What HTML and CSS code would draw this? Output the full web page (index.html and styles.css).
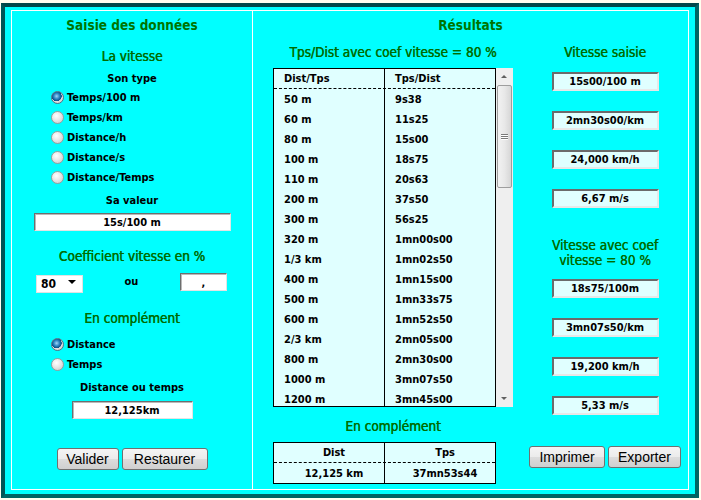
FILE: index.html
```html
<!DOCTYPE html>
<html>
<head>
  <title>Allure et vitesse</title>
  <link rel="stylesheet" href="styles.css">
</head>
<body>
  <div class="frame">
    <div class="panels">

      <section class="panel saisie">
        <h1>Saisie des données</h1>

        <h2 class="gap-vitesse">La vitesse</h2>
        <div class="label gap-7">Son type</div>
        <div class="radios gap-1">
          <label><input type="radio" name="type" checked> Temps/100 m</label>
          <label><input type="radio" name="type"> Temps/km</label>
          <label><input type="radio" name="type"> Distance/h</label>
          <label><input type="radio" name="type"> Distance/s</label>
          <label><input type="radio" name="type"> Distance/Temps</label>
        </div>

        <div class="label gap-7">Sa valeur</div>
        <input class="field valeur" type="text" value="15s/100 m">

        <h2 class="gap-coef">Coefficient vitesse en %</h2>
        <div class="coef-row">
          <div class="select">
            <select>
              <option>80</option>
              <option>90</option>
              <option>100</option>
            </select>
          </div>
          <span class="label">ou</span>
          <input class="field small" type="text" value=",">
        </div>

        <h2 class="gap-compl">En complément</h2>
        <div class="radios gap-7">
          <label><input type="radio" name="compl" checked> Distance</label>
          <label><input type="radio" name="compl"> Temps</label>
        </div>

        <div class="label gap-7">Distance ou temps</div>
        <input class="field distance" type="text" value="12,125km">

        <div class="buttons gap-buttons-left">
          <button class="btn valider">Valider</button>
          <button class="btn restaurer">Restaurer</button>
        </div>
      </section>

      <section class="panel resultats">
        <h1>Résultats</h1>

        <div class="cols">
          <div class="col-table">
            <h2>Tps/Dist avec coef vitesse = 80 %</h2>
            <div class="list-wrap">
              <div class="list">
                <div class="row head"><span>Dist/Tps</span><span>Tps/Dist</span></div>
                <div class="rows">
                  <!-- rows filled by script -->
                </div>
              </div>
              <div class="scrollbar">
                <div class="arrow up"></div>
                <div class="thumb"><i></i><i></i><i></i></div>
                <div class="arrow down"></div>
              </div>
            </div>

            <h2 class="gap-11">En complément</h2>
            <div class="compl-table">
              <div class="row head"><span>Dist</span><span>Tps</span></div>
              <div class="row"><span>12,125 km</span><span>37mn53s44</span></div>
            </div>
          </div>

          <div class="col-speed">
            <h2>Vitesse saisie</h2>
            <div class="boxes">
              <div class="box">15s00/100 m</div>
              <div class="box">2mn30s00/km</div>
              <div class="box">24,000 km/h</div>
              <div class="box">6,67 m/s</div>
            </div>

            <h2 class="two-lines"><span>Vitesse avec coef</span><span>vitesse = 80 %</span></h2>
            <div class="boxes gap-12">
              <div class="box">18s75/100m</div>
              <div class="box">3mn07s50/km</div>
              <div class="box">19,200 km/h</div>
              <div class="box">5,33 m/s</div>
            </div>

            <div class="buttons gap-buttons-right">
              <button class="btn imprimer">Imprimer</button>
              <button class="btn exporter">Exporter</button>
            </div>
          </div>
        </div>
      </section>

    </div>
  </div>

  <script>
    const temps = [
      ['50 m', '9s38'], ['60 m', '11s25'], ['80 m', '15s00'], ['100 m', '18s75'],
      ['110 m', '20s63'], ['200 m', '37s50'], ['300 m', '56s25'], ['320 m', '1mn00s00'],
      ['1/3 km', '1mn02s50'], ['400 m', '1mn15s00'], ['500 m', '1mn33s75'], ['600 m', '1mn52s50'],
      ['2/3 km', '2mn05s00'], ['800 m', '2mn30s00'], ['1000 m', '3mn07s50'], ['1200 m', '3mn45s00']
    ];

    const rows = document.querySelector('.list .rows');
    temps.forEach(t => {
      rows.innerHTML += `<div class="row"><span>${t[0]}</span><span>${t[1]}</span></div>`;
    });
  </script>
</body>
</html>
```

FILE: styles.css
```css
body {
  margin: 0;
  background-color: #fffff0;
  font-family: "DejaVu Sans Condensed", "DejaVu Sans", sans-serif;
  color: #000;
}

.frame {
  box-sizing: border-box;
  width: 698px;
  height: 495px;
  margin: 3px 0 0 1px;
  padding: 3px 6px 4px;
  background-color: #00ffff;
  border: 4px solid #006464;
  border-top-color: #004848;
  border-left-color: #005656;
}

.panels {
  box-sizing: border-box;
  height: 100%;
  display: grid;
  grid-template-columns: 241px 1fr;
  border: 1px solid #fff;
}

.panel {
  display: flex;
  flex-direction: column;
}

.saisie {
  align-items: center;
  border-right: 1px solid #fff;
}

h1 {
  margin: 5px 0 0;
  font-size: 13.5px;
  line-height: 18px;
  font-weight: bold;
  color: #007400;
  text-align: center;
}

h2 {
  margin: 0;
  font-size: 13.5px;
  line-height: 17px;
  font-weight: normal;
  color: #006c00;
  text-shadow: 0.4px 0 0 #006c00;
  text-align: center;
}

.label {
  font-size: 11px;
  line-height: 14px;
  font-weight: bold;
}

.gap-1 { margin-top: 1px; }
.gap-7 { margin-top: 7px; }
.gap-11 { margin-top: 11px; }
.gap-12 { margin-top: 12px; }
.gap-vitesse { margin-top: 14px; }
.gap-coef { margin-top: 17px; }
.gap-compl { margin-top: 19px; }
.gap-buttons-left { margin-top: 29px; }
.gap-buttons-right { margin-top: 31px; }

/* radio buttons */
.radios {
  align-self: stretch;
  padding-left: 39px;
}

.radios label {
  display: flex;
  align-items: center;
  height: 20px;
  font-size: 11px;
  font-weight: bold;
}

.radios input {
  appearance: none;
  width: 13px;
  height: 13px;
  margin: 0 3px 0 0;
  border: 1px solid #9c9c9c;
  border-radius: 50%;
  background: radial-gradient(circle at 40% 35%, #ffffff 0, #e8e8e8 45%, #c4c4c4 100%);
  box-sizing: border-box;
}

.radios input:checked {
  background:
    radial-gradient(circle at 42% 38%, #9fd6f7 0, #2d86c4 30%, #0b4a82 52%, transparent 56%),
    radial-gradient(circle at 40% 35%, #ffffff 0, #e8e8e8 45%, #c4c4c4 100%);
  border-color: #5a6f82;
}

/* text fields */
.field {
  box-sizing: border-box;
  height: 18px;
  padding: 0;
  margin: 0;
  background-color: #fff;
  border: 1px solid;
  border-color: #6e6e6e #e4e4e4 #e4e4e4 #6e6e6e;
  box-shadow: inset 1px 1px 0 #b9b9b9;
  font-family: inherit;
  font-size: 11px;
  font-weight: bold;
  text-align: center;
  outline: none;
}

.valeur {
  width: 197px;
  margin-top: 5px;
}

.distance {
  width: 121px;
  margin-top: 6px;
}

.coef-row {
  align-self: stretch;
  display: flex;
  align-items: center;
  justify-content: space-between;
  margin-top: 8px;
  padding: 0 25px 0 24px;
}

.small {
  width: 47px;
}

.select {
  position: relative;
  width: 47px;
  height: 18px;
}

.select select {
  appearance: none;
  box-sizing: border-box;
  width: 100%;
  height: 100%;
  margin: 0;
  padding: 0 0 0 4px;
  background-color: #fff;
  border: 1px solid #e2e2e2;
  border-radius: 0;
  font-family: inherit;
  font-size: 12px;
  font-weight: bold;
  color: #000;
}

.select::after {
  content: "";
  position: absolute;
  right: 7px;
  top: 7px;
  border-left: 4px solid transparent;
  border-right: 4px solid transparent;
  border-top: 4px solid #000;
  pointer-events: none;
}

/* buttons */
.buttons {
  display: flex;
  gap: 3px;
}

.btn {
  height: 22px;
  padding: 0;
  border: 1px solid #707070;
  border-radius: 3px;
  background: linear-gradient(#f4f4f4 0, #ebebeb 50%, #dcdcdc 51%, #cfcfcf 100%);
  font-family: "Liberation Sans", Arial, sans-serif;
  font-size: 14px;
  color: #000;
  cursor: pointer;
}

.valider { width: 62px; }
.restaurer { width: 86px; }
.imprimer { width: 76px; }
.exporter { width: 73px; }

/* results panel */
.cols {
  display: grid;
  grid-template-columns: 240px 1fr;
  column-gap: 9px;
  margin-top: 10px;
  padding-left: 20px;
}

.col-table,
.col-speed {
  display: flex;
  flex-direction: column;
  align-items: center;
}

.list-wrap {
  display: flex;
  margin-top: 7px;
}

.list,
.compl-table {
  box-sizing: border-box;
  width: 223px;
  background-color: #e0ffff;
  border: 1px solid #000;
  background-image: linear-gradient(#000, #000);
  background-size: 1px 100%;
  background-position: 110px 0;
  background-repeat: no-repeat;
}

.list {
  height: 339px;
  overflow: hidden;
}

.row {
  display: grid;
  grid-template-columns: 110px 1fr;
  column-gap: 1px;
  height: 20px;
  align-items: center;
  font-size: 11px;
  font-weight: bold;
}

.row span {
  padding-left: 10px;
}

.row.head {
  height: 19px;
  border-bottom: 1px dashed #000;
}

.compl-table {
  align-self: flex-start;
  margin-top: 7px;
}

.compl-table .row span {
  text-align: center;
}

.scrollbar {
  box-sizing: border-box;
  width: 17px;
  height: 339px;
  position: relative;
  background-color: #efefef;
}

.arrow {
  position: absolute;
  left: 5px;
  border-left: 3px solid transparent;
  border-right: 3px solid transparent;
}

.arrow.up {
  top: 7px;
  border-bottom: 3px solid #606060;
}

.arrow.down {
  bottom: 7px;
  border-top: 3px solid #606060;
}

.thumb {
  position: absolute;
  left: 1px;
  top: 17px;
  box-sizing: border-box;
  width: 15px;
  height: 103px;
  border: 1px solid #9e9e9e;
  border-radius: 2px;
  background: linear-gradient(90deg, #f2f2f2, #e8e8e8 50%, #d6d6d6);
  display: flex;
  flex-direction: column;
  align-items: center;
  justify-content: center;
  gap: 1px;
}

.thumb i {
  display: block;
  width: 7px;
  height: 1px;
  background-color: #7a7a7a;
  box-shadow: 0 1px 0 #fff;
}

.boxes {
  display: flex;
  flex-direction: column;
  gap: 20px;
  margin-top: 11px;
}

.box {
  box-sizing: border-box;
  width: 107px;
  height: 19px;
  line-height: 15px;
  background-color: #e0ffff;
  border: 2px solid;
  border-color: #6b6b6b #e8e8e8 #e8e8e8 #6b6b6b;
  font-size: 11px;
  font-weight: bold;
  text-align: center;
}

.two-lines {
  margin-top: 30px;
}

.two-lines span {
  display: block;
  height: 15px;
  line-height: 15px;
}
```
